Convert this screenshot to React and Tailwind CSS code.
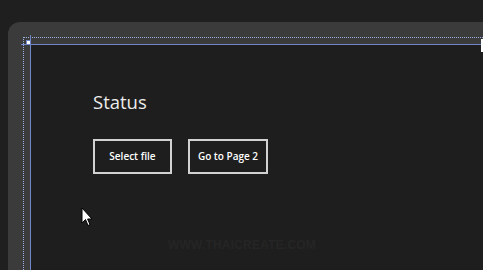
export default function App() {
  return (
    <div className="relative w-[483px] h-[270px] overflow-hidden bg-[#1f1f1f] pt-[22px] pl-[8px] flex">
      <div className="relative flex-1 flex rounded-tl-[12px] bg-[#3b3b3b] pt-[15px] pl-[15px]">
        {/* dotted outer frame */}
        <div className="relative flex-1 flex border-l border-t border-dotted border-[#9fb0e0] pt-[6px] pl-[6px]">
          {/* solid selection frame */}
          <div className="relative flex-1 border-l border-t border-[#6f87c9] bg-[#1e1e1e] pl-[62px] pt-[45px] font-['Open_Sans',sans-serif]">
            <div className="text-[18.5px] leading-[24px] text-[#ececec]">Status</div>
            <div className="mt-[25px] flex gap-[16px]">
              <div className="w-[79px] h-[35px] border-2 border-[#d2d2d2] flex items-center justify-center text-[10px] font-semibold text-white">
                Select file
              </div>
              <div className="w-[80px] h-[35px] border-2 border-[#d2d2d2] flex items-center justify-center text-[10px] font-semibold text-white">
                Go to Page 2
              </div>
            </div>
            <div className="mt-[62px] ml-[75px] text-[12px] font-bold tracking-[0.2px] text-[#252525] font-['Liberation_Sans',sans-serif]">
              WWW.THAICREATE.COM
            </div>
          </div>
          {/* extensions of solid lines past corner */}
          <div className="absolute left-[-3px] top-[6px] w-[9px] h-px bg-[#6f87c9]" />
          <div className="absolute left-[6px] top-[-3px] w-px h-[9px] bg-[#6f87c9]" />
          {/* corner handle */}
          <div className="absolute left-[2px] top-[2px] w-[5px] h-[5px] bg-white border border-[#6f87c9]" />
        </div>
      </div>
      {/* right edge handle */}
      <div className="absolute left-[481px] top-[39px] w-[4px] h-[13px] bg-white" />
      {/* mouse cursor */}
      <svg className="absolute left-[81px] top-[207px]" width="12" height="20" viewBox="0 0 12 20">
        <path d="M1 1 L1 16 L4.5 12.5 L7 18.5 L9 17.6 L6.6 12 L11 12 Z" fill="#ffffff" stroke="#000000" strokeWidth="1" strokeLinejoin="miter" />
      </svg>
    </div>
  );
}
